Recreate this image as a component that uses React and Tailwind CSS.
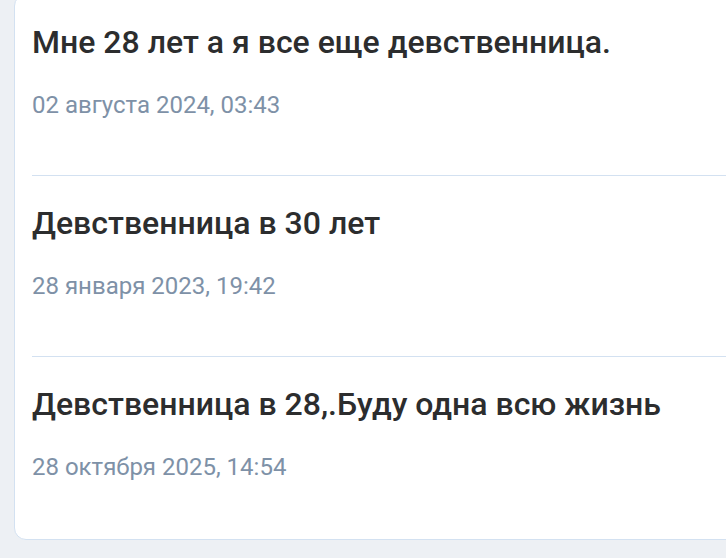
import React from "react";

const items = [
  { title: "Мне 28 лет а я все еще девственница.", date: "02 августа 2024, 03:43" },
  { title: "Девственница в 30 лет", date: "28 января 2023, 19:42" },
  { title: "Девственница в 28,.Буду одна всю жизнь", date: "28 октября 2025, 14:54" },
];

export default function App() {
  return (
    <div className="w-[726px] h-[558px] overflow-hidden bg-[#edf0f4]" style={{ fontFamily: "Roboto, 'Noto Sans', sans-serif" }}>
      <div className="ml-[14px] w-[760px] -mt-[6px] bg-white border border-[#d3e1f1] rounded-xl">
        <div className="pl-[17px]">
          {items.map((it, i) => (
            <div
              key={i}
              className={
                i < items.length - 1
                  ? "pt-[27px] pb-[54px] border-b border-[#d3e1f1]"
                  : "pt-[27px] pb-[56px]"
              }
            >
              <div className="text-[32px] leading-[40px] font-medium text-[#2c2d2e]">{it.title}</div>
              <div className="mt-[27px] text-[24px] leading-[32px] text-[#7e91a7]">{it.date}</div>
            </div>
          ))}
        </div>
      </div>
    </div>
  );
}
